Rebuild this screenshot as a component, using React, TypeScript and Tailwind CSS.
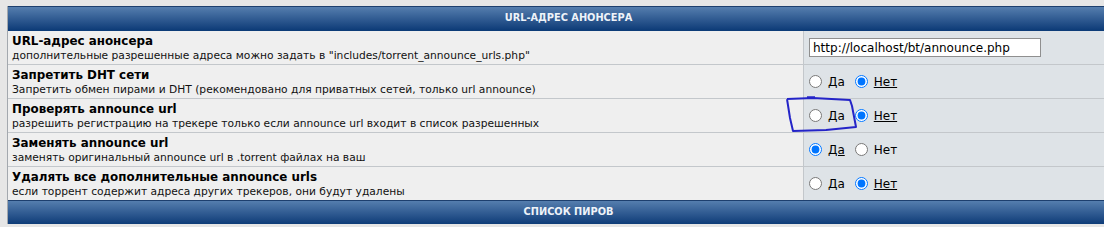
const rows: {
  title: string;
  desc: string;
  kind: "input" | "yesno";
  value?: boolean;
}[] = [
  {
    title: "URL-адрес анонсера",
    desc: 'дополнительные разрешенные адреса можно задать в "includes/torrent_announce_urls.php"',
    kind: "input",
  },
  {
    title: "Запретить DHT сети",
    desc: "Запретить обмен пирами и DHT (рекомендовано для приватных сетей, только url announce)",
    kind: "yesno",
    value: false,
  },
  {
    title: "Проверять announce url",
    desc: "разрешить регистрацию на трекере только если announce url входит в список разрешенных",
    kind: "yesno",
    value: false,
  },
  {
    title: "Заменять announce url",
    desc: "заменять оригинальный announce url в .torrent файлах на ваш",
    kind: "yesno",
    value: true,
  },
  {
    title: "Удалять все дополнительные announce urls",
    desc: "если торрент содержит адреса других трекеров, они будут удалены",
    kind: "yesno",
    value: false,
  },
];

function HeaderRow({ children }: { children: string }) {
  return (
    <div className="flex h-[24px] items-center justify-center border-t border-[#1d3f6e] bg-gradient-to-b from-[#557eae] to-[#0d3c78] text-[9.8px] font-bold uppercase text-[#eef3f9]">
      {children}
    </div>
  );
}

function YesNo({ name, value }: { name: string; value: boolean }) {
  return (
    <div className="flex items-center text-[12px] text-black">
      <label className="flex items-center">
        <input
          className="m-0 size-[13px]"
          defaultChecked={value}
          name={name}
          type="radio"
        />
        <span className={value ? "ml-[6px] underline" : "ml-[6px]"}>Да</span>
      </label>
      <label className="ml-[10px] flex items-center">
        <input
          className="m-0 size-[13px]"
          defaultChecked={!value}
          name={name}
          type="radio"
        />
        <span className={value ? "ml-[6px]" : "ml-[6px] underline"}>Нет</span>
      </label>
    </div>
  );
}

export default function App() {
  return (
    <div
      className="relative h-[227px] w-[1104px] overflow-hidden bg-[#e6e6e6] pl-[7px] pt-[6px]"
      style={{ fontFamily: '"DejaVu Sans", Verdana, sans-serif' }}
    >
      <div className="w-[1122px] border-l border-[#a3a8ae]">
        <HeaderRow>URL-адрес анонсера</HeaderRow>
        {rows.map((row, i) => (
          <div
            className="flex h-[34px] border-t border-[#c3c7cb]"
            key={row.title}
            style={i === 0 ? { borderTopColor: "#0d3c78" } : undefined}
          >
            <div className="flex w-[796px] flex-col justify-center border-r border-[#c3c7cb] bg-[#efefef] pl-[4px]">
              <div className="text-[11.9px] font-bold leading-[15px] text-black">
                {row.title}
              </div>
              <div className="text-[10.7px] leading-[13px] text-[#111]">
                {row.desc}
              </div>
            </div>
            <div className="flex flex-1 items-center bg-[#dee3e7] pl-[5px]">
              {row.kind === "input" ? (
                <input
                  className="h-[19px] w-[232px] border border-[#8f8f8f] bg-white px-[3px] text-[12px] text-black"
                  defaultValue="http://localhost/bt/announce.php"
                  style={{ fontFamily: '"DejaVu Sans", Verdana, sans-serif' }}
                  type="text"
                />
              ) : (
                <YesNo name={`r${i}`} value={!!row.value} />
              )}
            </div>
          </div>
        ))}
        <HeaderRow>Список пиров</HeaderRow>
      </div>
      <svg
        className="pointer-events-none absolute left-0 top-0"
        height="227"
        width="1104"
      >
        <path
          d="M787 99 L813 98 L850 100 L852 106 L856 127 L826 130 L793 131 L790 118 L787 99"
          fill="none"
          stroke="#2424c8"
          strokeLinejoin="round"
          strokeWidth="2"
        />
        <path d="M807 97.5 L815 97.5" stroke="#2424c8" strokeWidth="2.5" />
      </svg>
    </div>
  );
}
